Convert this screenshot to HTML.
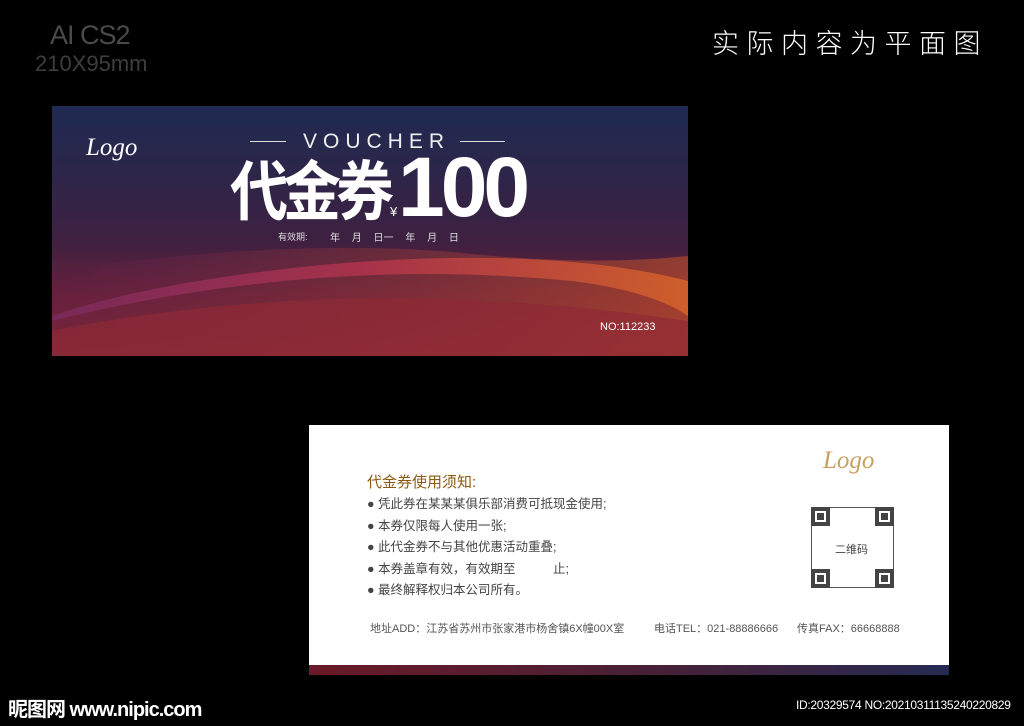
<!DOCTYPE html>
<html><head><meta charset="utf-8"><style>
*{margin:0;padding:0;box-sizing:border-box}
body{width:1024px;height:726px;background:#000;position:relative;overflow:hidden;font-family:"Liberation Sans","Noto Sans CJK SC",sans-serif}
.a{position:absolute;white-space:nowrap}
.q{position:absolute;width:19px;height:19px;border:4px solid #444;background:#fff}
.q div{margin:2px;width:7px;height:7px;background:#444}
</style></head><body>
<div class="a" style="left:50px;top:20px;font-size:27px;color:#4a4a4a;font-weight:300;letter-spacing:-1px">AI CS2</div>
<div class="a" style="left:35px;top:51px;font-size:22px;color:#3e3e3e">210X95mm</div>
<div class="a" style="left:712px;top:22px;font-size:27px;color:#fff;letter-spacing:7.5px;font-weight:300">实际内容为平面图</div>

<div class="a" style="left:52px;top:106px;width:636px;height:250px;overflow:hidden;background:linear-gradient(180deg,#1f2a52 0%,#2e2548 30%,#3f2040 55%,#6a2238 75%,#8c2a33 100%)">
<svg class="a" style="left:0;top:0" width="636" height="250">
<defs><linearGradient id="g" x1="0" x2="1"><stop offset="0" stop-color="#7a2a5e"/><stop offset=".5" stop-color="#b2344c"/><stop offset="1" stop-color="#d6642a"/></linearGradient>
<linearGradient id="g2" x1="0" x2="1"><stop offset="0" stop-color="#5a1c4a" stop-opacity=".5"/><stop offset="1" stop-color="#c0502a"/></linearGradient></defs>
<path d="M0 165 Q250 130 420 148 Q540 160 636 150 L636 250 L0 250Z" fill="url(#g2)" opacity=".6"/>
<path d="M0 215 Q260 150 520 175 Q600 185 636 210 L636 175 Q500 140 280 158 Q100 175 0 210Z" fill="url(#g)" opacity=".85"/>
<path d="M0 250 L0 225 Q300 165 636 215 L636 250Z" fill="#8e2a36" opacity=".7"/>
</svg>
<div class="a" style="left:34px;top:28px;font-family:'Liberation Serif',serif;font-style:italic;font-size:25px;color:#fff">Logo</div>
<div class="a" style="left:198px;top:35px;width:36px;height:1px;background:#ddd"></div>
<div class="a" style="left:408px;top:35px;width:45px;height:1px;background:#ddd"></div>
<div class="a" style="left:251px;top:24px;font-size:21px;color:#eee;letter-spacing:6px">VOUCHER</div>
<div class="a" style="left:178px;top:48px;font-size:58px;font-weight:bold;color:#fff;letter-spacing:-5px;line-height:70px;transform:scaleY(1.12);transform-origin:top left">代金券</div>
<div class="a" style="left:338px;top:98px;font-size:13px;color:#fff">¥</div>
<div class="a" style="left:346px;top:36px;font-size:84px;font-weight:bold;color:#fff;letter-spacing:-4px;line-height:90px">100</div>
<div class="a" style="left:226px;top:124px;font-size:9px;color:#ddd">有效期:</div>
<div class="a" style="left:278px;top:123px;font-size:10px;color:#ddd;word-spacing:9px">年 月 日一 年 月 日</div>
<div class="a" style="left:548px;top:215px;font-size:11px;color:#fff">NO:112233</div>
</div>

<div class="a" style="left:309px;top:425px;width:640px;height:250px;background:#fff">
<div class="a" style="left:0;bottom:0;width:640px;height:10px;background:linear-gradient(90deg,#6a1a28,#4a2034,#262a52)"></div>
<div class="a" style="left:514px;top:22px;font-family:'Liberation Serif',serif;font-style:italic;font-size:25px;color:#c9a060">Logo</div>
<div class="a" style="left:58px;top:46px;font-size:15px;color:#8a5a10">代金券使用须知:</div>
<div class="a" style="left:58px;top:69px;font-size:12.5px;color:#444;line-height:21.5px">● 凭此券在某某某俱乐部消费可抵现金使用;<br>● 本券仅限每人使用一张;<br>● 此代金券不与其他优惠活动重叠;<br>● 本券盖章有效，有效期至　　　止;<br>● 最终解释权归本公司所有。</div>
<div class="a" style="left:502px;top:82px;width:83px;height:81px;border:1px solid #555"></div>
<div class="q" style="left:502px;top:82px"><div></div></div>
<div class="q" style="left:566px;top:82px"><div></div></div>
<div class="q" style="left:502px;top:144px"><div></div></div>
<div class="q" style="left:566px;top:144px"><div></div></div>
<div class="a" style="left:526px;top:116px;font-size:11px;color:#444">二维码</div>
<div class="a" style="left:61px;top:195px;font-size:11px;color:#555">地址ADD：江苏省苏州市张家港市杨舍镇6X幢00X室</div>
<div class="a" style="left:345px;top:195px;font-size:11px;color:#555">电话TEL：021-88886666</div>
<div class="a" style="left:488px;top:195px;font-size:11px;color:#555">传真FAX：66668888</div>
</div>

<div class="a" style="left:8px;top:693px;font-size:20px;font-weight:bold;color:#fff;letter-spacing:-1px">昵图网 www.nipic.com</div>
<div class="a" style="left:796px;top:698px;font-size:12px;color:#fff;letter-spacing:-0.3px">ID:20329574 NO:20210311135240220829</div>
</body></html>
